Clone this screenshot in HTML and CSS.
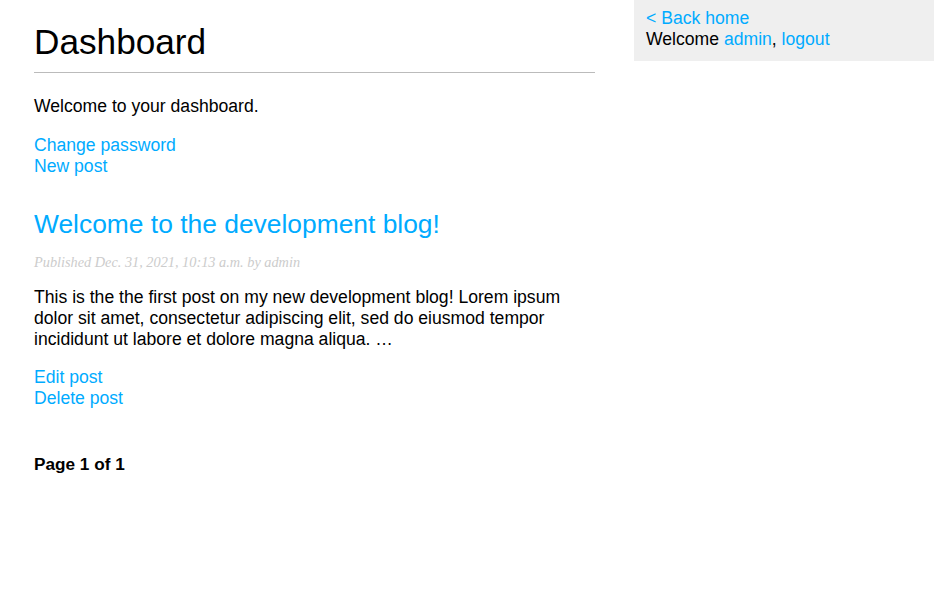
FILE: index.html
```html
<!DOCTYPE html>
<html>
<head>
<meta charset="utf-8">
<title>Dashboard</title>
<link rel="stylesheet" href="styles.css">
</head>
<body>
<div class="page">
  <div class="content">
    <h1 class="title">Dashboard</h1>
    <p class="intro">Welcome to your dashboard.</p>
    <p class="links first-links">
      <a href="#">Change password</a><br>
      <a href="#">New post</a>
    </p>
    <h2 class="post-title"><a href="#">Welcome to the development blog!</a></h2>
    <p class="date">Published Dec. 31, 2021, 10:13 a.m. by admin</p>
    <p class="body-text">This is the the first post on my new development blog! Lorem ipsum dolor sit amet, consectetur adipiscing elit, sed do eiusmod tempor incididunt ut labore et dolore magna aliqua. …</p>
    <p class="links post-links">
      <a href="#">Edit post</a><br>
      <a href="#">Delete post</a>
    </p>
    <div class="pagination"><span class="current">Page 1 of 1</span></div>
  </div>
  <div class="sidebar">
    <a href="#">&lt; Back home</a><br>
    Welcome <a href="#">admin</a>, <a href="#">logout</a>
  </div>
</div>
</body>
</html>
```
FILE: styles.css
```css
html, body {
  margin: 0;
  padding: 0;
}
body {
  font-family: "Liberation Sans", Arial, Helvetica, sans-serif;
  font-size: 17.6px;
  line-height: 21px;
  color: #000;
  background: #fff;
}
a {
  color: #00abff;
  text-decoration: none;
}
.page {
  display: flex;
  justify-content: space-between;
  align-items: flex-start;
}
.content {
  width: 561px;
  margin-left: 34px;
}
.title {
  font-size: 35.2px;
  line-height: 41px;
  font-weight: normal;
  margin: 21px 0 0;
  padding: 0 0 10px;
  border-bottom: 1px solid #bbb;
}
.intro {
  margin: 23px 0 0;
}
.first-links {
  margin: 18px 0 0;
}
.post-title {
  font-size: 26.4px;
  line-height: 32px;
  font-weight: normal;
  margin: 31px 0 0;
}
.date {
  font-family: "Liberation Serif", Georgia, serif;
  font-style: italic;
  font-size: 14.3px;
  line-height: 16px;
  color: #ccc;
  margin: 14px 0 0;
}
.body-text {
  margin: 17px 0 0;
}
.post-links {
  margin: 17px 0 0;
}
.pagination {
  margin-top: 45px;
  font-weight: bold;
  font-size: 17.2px;
}
.sidebar {
  width: 278px;
  padding: 8px 10px 11px 12px;
  background: #efefef;
}
```
